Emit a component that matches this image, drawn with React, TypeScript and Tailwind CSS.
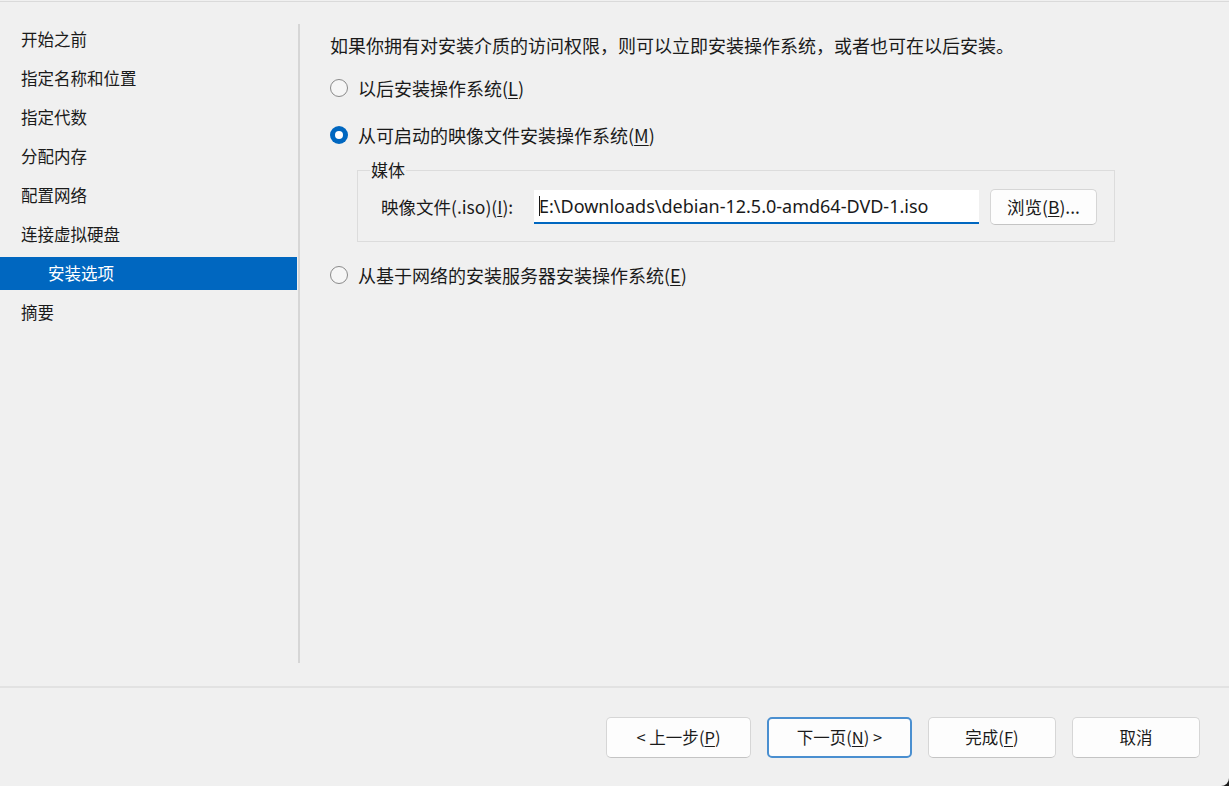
import React from "react";

const CJK = "font-['Microsoft_YaHei','Noto_Sans_CJK_SC',sans-serif]";

const steps = [
  "开始之前",
  "指定名称和位置",
  "指定代数",
  "分配内存",
  "配置网络",
  "连接虚拟硬盘",
  "安装选项",
  "摘要",
];

function Radio({ checked }: { checked?: boolean }) {
  if (checked) {
    return (
      <span className="flex h-[18px] w-[18px] shrink-0 items-center justify-center rounded-full bg-[#0067c0]">
        <span className="h-[8px] w-[8px] rounded-full bg-white" />
      </span>
    );
  }
  return (
    <span className="h-[18px] w-[18px] shrink-0 rounded-full border border-[#8a8a8a] bg-[#f6f6f6]" />
  );
}

function Key({ k }: { k: string }) {
  return (
    <>
      (<span className="underline underline-offset-2 decoration-1">{k}</span>)
    </>
  );
}

function Option({ checked, label, k }: { checked?: boolean; label: string; k: string }) {
  return (
    <div className="flex h-[24px] items-center gap-[10px]">
      <Radio checked={checked} />
      <span className="text-[18px] leading-[24px]">
        {label}
        <Key k={k} />
      </span>
    </div>
  );
}

function FooterButton({
  children,
  w,
  focused,
}: {
  children: React.ReactNode;
  w: string;
  focused?: boolean;
}) {
  return (
    <button
      className={`${w} flex h-[41px] items-center justify-center rounded-[5px] bg-[#fdfdfd] text-[16.5px] text-[#1b1b1b] ${
        focused
          ? "border-2 border-[#4a8fd0]"
          : "border border-[#d6d6d6] border-b-[#c4c4c4]"
      }`}
    >
      {children}
    </button>
  );
}

export default function App() {
  return (
    <div className="h-[786px] w-[1229px] bg-[#1c1c1c]">
      <div
        className={`${CJK} flex h-full w-full flex-col overflow-hidden rounded-br-[8px] bg-[#f0f0f0] text-[#1a1a1a]`}
      >
        <div className="mt-px border-t border-[#dadada]" />
        <div className="flex h-[684px]">
          {/* wizard steps */}
          <div className="w-[298px] shrink-0 pt-[18px]">
            {steps.map((s) =>
              s === "安装选项" ? (
                <div key={s} className="flex h-[39px] items-center">
                  <div className="flex h-[33px] w-[297px] items-center bg-[#0067c0] pl-[48px] text-[16.5px] text-white">
                    {s}
                  </div>
                </div>
              ) : (
                <div key={s} className="flex h-[39px] items-center pl-[21px] text-[16.5px]">
                  {s}
                </div>
              )
            )}
          </div>
          <div className="mt-[22px] h-[639px] w-[2px] shrink-0 bg-[#d6d6d6]" />

          {/* install options */}
          <div className="flex flex-col pl-[30px] pt-[31px]">
            <div className="h-[24px] text-[18px] leading-[24px]">
              如果你拥有对安装介质的访问权限，则可以立即安装操作系统，或者也可在以后安装。
            </div>
            <div className="mt-[19px]">
              <Option label="以后安装操作系统" k="L" />
            </div>
            <div className="mt-[23px]">
              <Option checked label="从可启动的映像文件安装操作系统" k="M" />
            </div>

            <fieldset className="ml-[27px] mt-[12px] w-[758px] border border-[#dcdcdc] px-[12px] pb-[16px] pt-[8px]">
              <legend className="px-[1px] text-[17px] leading-[22px]">媒体</legend>
              <div className="flex items-center pl-[11px]">
                <span className="w-[153px] shrink-0 text-[17.5px]">
                  映像文件(.iso)
                  <Key k="I" />:
                </span>
                <div className="flex h-[34px] w-[445px] items-center border-b-2 border-[#0067c0] bg-white pl-[5px] font-['Segoe_UI','Noto_Sans',sans-serif] text-[18px]">
                  <span className="mr-[-1px] h-[20px] w-px bg-[#1a1a1a]" />
                  E:\Downloads\debian-12.5.0-amd64-DVD-1.iso
                </div>
                <button className="ml-[11px] flex h-[36px] w-[107px] items-center justify-center rounded-[5px] border border-[#d6d6d6] border-b-[#c4c4c4] bg-[#fdfdfd] text-[17.5px]">
                  浏览
                  <Key k="B" />
                  ...
                </button>
              </div>
            </fieldset>

            <div className="mt-[21px]">
              <Option label="从基于网络的安装服务器安装操作系统" k="E" />
            </div>
          </div>
        </div>

        <div className="h-[2px] bg-[#e2e2e2]" />

        {/* wizard navigation */}
        <div className="flex flex-1 items-start justify-end gap-[16px] pr-[29px] pt-[29px]">
          <FooterButton w="w-[145px]">
            &lt; 上一步
            <Key k="P" />
          </FooterButton>
          <FooterButton w="w-[145px]" focused>
            下一页
            <Key k="N" />
            &nbsp;&gt;
          </FooterButton>
          <FooterButton w="w-[128px]">
            完成
            <Key k="F" />
          </FooterButton>
          <FooterButton w="w-[128px]">取消</FooterButton>
        </div>
      </div>
    </div>
  );
}
